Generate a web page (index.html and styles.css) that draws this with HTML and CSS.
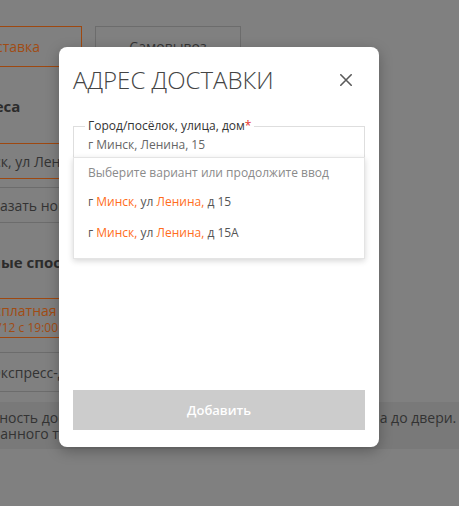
FILE: index.html
```html
<!DOCTYPE html>
<html lang="ru">
<head>
<meta charset="utf-8">
<title>Адрес доставки</title>
<link rel="stylesheet" href="styles.css">
</head>
<body>
<div class="page">
  <div class="tabs">
    <div class="tab tab-active">Доставка</div>
    <div class="tab">Самовывоз</div>
  </div>
  <h3 class="section-title section-title-1">Мои адреса</h3>
  <div class="addr-box addr-selected">г Минск, ул Ленина, д 15</div>
  <div class="addr-box addr-new">Указать новый адрес</div>
  <h3 class="section-title section-title-2">Доступные способы доставки</h3>
  <div class="method method-active">
    <div class="method-name">Бесплатная доставка</div>
    <div class="method-time">Пн 5/12 с 19:00 до 22:00</div>
  </div>
  <div class="method method-plain">Экспресс-доставка</div>
  <div class="info-band">Возможность доставки курьерами от склада ближнего магазина до двери.<br>от выбранного типа доставки и веса заказа.</div>
</div>

<div class="overlay">
  <div class="modal">
    <div class="modal-head">
      <h2 class="modal-title">АДРЕС ДОСТАВКИ</h2>
      <button class="close-btn" type="button" aria-label="Закрыть">
        <svg width="12" height="12" viewBox="0 0 12 12"><path d="M0.8 0.8 L11.2 11.2 M11.2 0.8 L0.8 11.2" stroke="#5a5a5a" stroke-width="1.6" fill="none" stroke-linecap="round"/></svg>
      </button>
    </div>
    <div class="field">
      <fieldset class="field-box">
        <legend class="field-label">Город/посёлок, улица, дом<span class="req">*</span></legend>
        <div class="field-value">г Минск, Ленина, 15</div>
      </fieldset>
      <ul class="suggest">
        <li class="suggest-hint">Выберите вариант или продолжите ввод</li>
        <li class="suggest-item">г <span class="hl">Минск,</span> ул <span class="hl">Ленина,</span> д 15</li>
        <li class="suggest-item">г <span class="hl">Минск,</span> ул <span class="hl">Ленина,</span> д 15А</li>
      </ul>
    </div>
    <button class="submit-btn" type="button">Добавить</button>
  </div>
</div>
</body>
</html>
```
FILE: styles.css
```css
* { box-sizing: border-box; }
html, body { margin: 0; padding: 0; }
body {
  background: #808080;
  font-family: "Open Sans", "Liberation Sans", sans-serif;
  width: 459px;
  height: 506px;
  overflow: hidden;
  position: relative;
}

/* background page (seen through the dimming overlay) */
.page {
  margin-left: -64px;
  width: 305px;
  padding-top: 26px;
  color: #333;
  font-size: 14px;
}
.tabs {
  display: flex;
  gap: 13px;
}
.tab {
  flex: 1;
  height: 41px;
  border: 1px solid #6c6c6c;
  display: flex;
  align-items: center;
  justify-content: center;
  color: #353535;
}
.tab-active {
  border-color: #9e4810;
  color: #a04c14;
}
.section-title {
  margin: 29px 0 0;
  font-size: 15px;
  font-weight: 700;
  line-height: 20px;
  color: #2c2c2c;
  white-space: nowrap;
}
.section-title-1 { text-indent: -8px; }
.section-title-2 { margin-top: 29px; }
.addr-box {
  height: 36px;
  border: 1px solid #6c6c6c;
  display: flex;
  align-items: center;
  white-space: nowrap;
  color: #333;
}
.addr-selected {
  margin-top: 27px;
  border-color: #9e4810;
  padding-left: 17px;
}
.addr-new {
  margin-top: 8px;
  padding-left: 47px;
}
.method {
  height: 40px;
  border: 1px solid #6c6c6c;
  white-space: nowrap;
}
.method-active {
  margin-top: 26px;
  border-color: #9e4810;
  padding: 3px 0 0 41px;
  color: #a04c14;
}
.method-name { font-size: 14px; line-height: 17px; }
.method-time { font-size: 12px; line-height: 17px; text-indent: -7px; }
.method-plain {
  margin-top: 14px;
  border-left: none;
  border-right: none;
  display: flex;
  align-items: center;
  padding-left: 56px;
}
.info-band {
  margin-top: 10px;
  width: 560px;
  height: 47px;
  background: #797979;
  padding: 8px 0 0 10px;
  line-height: 16px;
  white-space: nowrap;
  color: #333;
}

/* modal */
.overlay {
  position: absolute;
  inset: 0;
}
.modal {
  position: absolute;
  left: 59px;
  top: 47px;
  width: 320px;
  height: 400px;
  background: #fff;
  border-radius: 8px;
  box-shadow: 0 4px 14px rgba(0, 0, 0, 0.28);
  padding: 17px 14px 17px;
  display: flex;
  flex-direction: column;
}
.modal-head {
  display: flex;
  align-items: center;
  justify-content: space-between;
  height: 32px;
}
.modal-title {
  margin: 0;
  font-size: 24px;
  font-weight: 300;
  line-height: 32px;
  color: #444;
  white-space: nowrap;
}
.close-btn {
  width: 24px;
  height: 24px;
  margin-right: 7px;
  padding: 0;
  border: none;
  background: none;
  display: flex;
  align-items: center;
  justify-content: center;
}
.field {
  position: relative;
  margin-top: 22px;
}
.field-box {
  margin: 0;
  padding: 0 11px;
  border: 1px solid #dedede;
  min-width: 0;
}
.field-label {
  padding: 0 3px;
  font-size: 12px;
  line-height: 16px;
  color: #333;
}
.req { color: #e5302a; }
.field-value {
  padding: 2px 3px 3px;
  font-size: 12px;
  line-height: 18px;
  color: #666;
}
.suggest {
  position: absolute;
  left: 0;
  right: 0;
  top: calc(100% - 1px);
  margin: 0;
  padding: 0 0 10px;
  list-style: none;
  background: #fff;
  border: 1px solid #e4e4e4;
  box-shadow: 0 2px 6px rgba(0, 0, 0, 0.16);
  font-size: 12px;
  line-height: 18px;
}
.suggest-hint {
  padding: 6px 14px 4px;
  color: #8a8a8a;
}
.suggest-item {
  padding: 6.5px 14px;
  color: #555;
}
.hl { color: #ff6d1c; }
.submit-btn {
  margin-top: auto;
  height: 40px;
  width: 100%;
  border: none;
  background: #cccccc;
  color: #fff;
  font-family: "Open Sans", "Liberation Sans", sans-serif;
  font-size: 13px;
  font-weight: 600;
}
```
